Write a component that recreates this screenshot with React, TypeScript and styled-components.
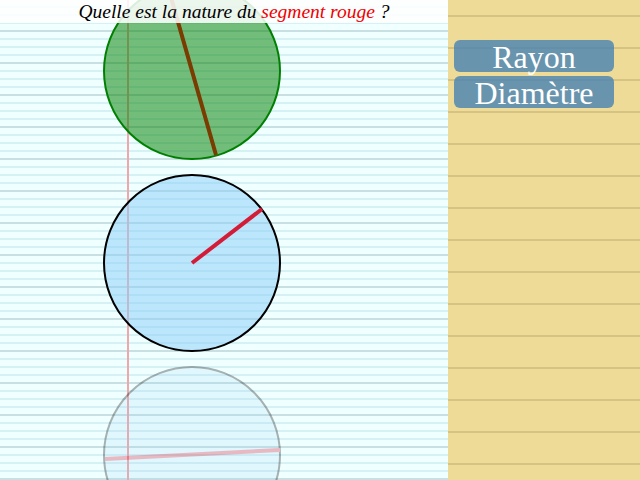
import React from 'react'
import styled, { createGlobalStyle } from 'styled-components'

const GlobalStyle = createGlobalStyle`
  html, body {
    margin: 0;
    padding: 0;
    overflow: hidden;
  }
`

type Circle = {
  cy: number
  fill: string
  stroke: string
  seg: [number, number, number, number]
  segColor: string
  faded?: boolean
}

const circles: Circle[] = [
  { cy: 71, fill: 'rgba(0,128,0,0.52)', stroke: '#008000', seg: [168, -13, 216, 155], segColor: '#7a3c00' },
  { cy: 263, fill: 'rgba(135,206,250,0.5)', stroke: '#000', seg: [192, 263, 262, 209], segColor: '#d41c38' },
  { cy: 455, fill: 'rgba(135,206,250,0.5)', stroke: '#000', seg: [105, 459, 280, 450], segColor: '#d41c38', faded: true },
]

const answers = ['Rayon', 'Diamètre']

const App = () => {
  return (
    <>
      <GlobalStyle />
      <Screen>
        <Paper>
          <Drawing width={448} height={480} viewBox="0 0 448 480">
            {circles.map((c, i) => (
              <g key={i} opacity={c.faded ? 0.3 : 1}>
                <circle cx={192} cy={c.cy} r={88} fill={c.fill} stroke={c.stroke} strokeWidth={2} />
                <line x1={c.seg[0]} y1={c.seg[1]} x2={c.seg[2]} y2={c.seg[3]} stroke={c.segColor} strokeWidth={4} />
              </g>
            ))}
          </Drawing>
          <Question>
            Quelle est la nature du <Red>segment rouge</Red> ?
          </Question>
        </Paper>
        <Side>
          {answers.map((a) => (
            <Choice key={a}>{a}</Choice>
          ))}
        </Side>
      </Screen>
    </>
  )
}

export default App

const Screen = styled.div`
  display: flex;
  width: 640px;
  height: 480px;
  overflow: hidden;
`

const Paper = styled.div`
  position: relative;
  width: 448px;
  height: 480px;
  background:
    repeating-linear-gradient(to bottom, transparent 0, transparent 30px, #c8e0e1 30px, #c8e0e1 32px),
    repeating-linear-gradient(to bottom, transparent 0, transparent 6px, #d6f1f4 6px, #d6f1f4 8px),
    #f0ffff;

  /* red margin rule */
  &::before {
    content: '';
    position: absolute;
    top: 0;
    bottom: 0;
    left: 127px;
    width: 1.5px;
    background: #f2a6aa;
  }
`

const Drawing = styled.svg`
  position: relative;
  display: block;
`

const Question = styled.div`
  position: absolute;
  top: 0;
  left: 0;
  right: 0;
  height: 23px;
  padding-left: 20px;
  background: rgba(255, 255, 255, 0.86);
  font-family: 'Liberation Serif', serif;
  font-style: italic;
  font-size: 19.5px;
  line-height: 23px;
  text-align: center;
  color: #000;
`

const Red = styled.span`
  color: #f00000;
`

const Side = styled.div`
  flex: 1;
  display: flex;
  flex-direction: column;
  gap: 4px;
  padding: 40px 26px 0 6px;
  background-color: #eedb98;
  background-image: repeating-linear-gradient(to bottom, transparent 0, transparent 15px, #d6c282 15px, #d6c282 17px, transparent 17px, transparent 32px);
`

const Choice = styled.div`
  height: 32px;
  border-radius: 6px;
  background: rgba(70, 130, 180, 0.8);
  color: #fff;
  font-family: 'Liberation Serif', serif;
  font-size: 32px;
  line-height: 34px;
  text-align: center;
  cursor: pointer;
`
